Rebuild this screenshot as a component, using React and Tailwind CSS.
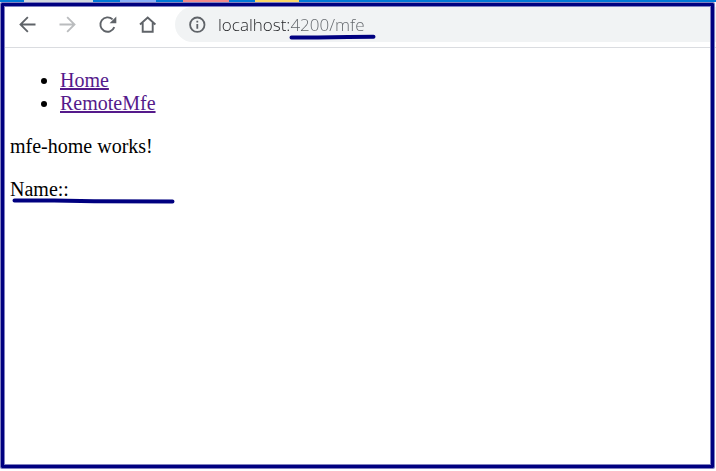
const tabs = [
  "ml-6 w-[69px] bg-[#d3d9df]",
  "ml-[27px] w-9 bg-[#8ab0f8]",
  "ml-[27px] w-[46px] bg-[#f08a88]",
  "ml-[26px] w-11 bg-[#fbd766]",
];

function TabStrip() {
  return (
    <div className="flex h-[2px] bg-[#0078d7]">
      {tabs.map((tab) => (
        <span key={tab} className={tab} />
      ))}
    </div>
  );
}

function ToolButton({ label, disabled, children }) {
  return (
    <button
      type="button"
      aria-label={label}
      disabled={disabled}
      className="flex size-10 shrink-0 items-center justify-center text-[#5f6368] disabled:text-[#babcbe]"
    >
      <svg viewBox="0 0 24 24" className="size-6" fill="currentColor" aria-hidden="true">
        {children}
      </svg>
    </button>
  );
}

function Toolbar() {
  return (
    <header className="flex h-[46px] items-center border-b border-[#dadce0] pl-2">
      <ToolButton label="Back">
        <path d="M19.500 10.500H6.800l5.700-5.700L11.200 3.500l-8 8 8 8 1.300-1.300-5.700-5.700H19.500z" />
      </ToolButton>
      <ToolButton label="Forward" disabled>
        <path d="M3.500 10.500H16.200l-5.700-5.700L11.800 3.500l8 8-8 8-1.300-1.300 5.700-5.700H3.500z" />
      </ToolButton>
      <ToolButton label="Reload">
        <path
          d="M18.300 14.200A7.200 7.200 0 1 1 16.600 6.400"
          fill="none"
          stroke="currentColor"
          strokeWidth="1.900"
        />
        <path d="M20.300 3.500V10.200H13.600z" />
      </ToolButton>
      <ToolButton label="Home">
        <path
          d="M4 11.500 11.700 4.600 19.400 11.500M6.700 9.800V18.700H16.700V9.800"
          fill="none"
          stroke="currentColor"
          strokeWidth="1.900"
        />
      </ToolButton>
      <div className="ml-[7px] flex h-[35px] min-w-0 flex-1 items-center rounded-l-full bg-[#f1f3f4] pl-3">
        <button type="button" aria-label="View site information" className="shrink-0 text-[#5f6368]">
          <svg viewBox="0 0 20 20" className="size-5" aria-hidden="true">
            <circle cx="10.300" cy="9.700" r="7.200" fill="none" stroke="currentColor" strokeWidth="1.800" />
            <path d="M9.400 9h1.800v4.700H9.400zM9.400 5.800h1.800v1.800H9.400z" fill="currentColor" />
          </svg>
        </button>
        <input
          type="text"
          aria-label="Address"
          defaultValue="localhost:4200/mfe"
          className="ml-[11px] h-7 min-w-0 flex-1 bg-linear-to-r from-[#202124] from-[72px] to-[#5f6368] to-[72px] bg-clip-text font-['Open_Sans',sans-serif] text-[17px] font-light text-transparent caret-black outline-none"
        />
      </div>
    </header>
  );
}

function Markup() {
  return (
    <div className="pointer-events-none absolute inset-0" aria-hidden="true">
      <div className="absolute top-[3px] right-[2px] bottom-[3px] left-px rounded-[1px] border-3 border-[#000080] shadow-[0_0_0_1px_#8080c0,inset_0_0_0_1px_#8080c0]" />
      <svg className="absolute top-[34px] left-[288px] h-2 w-[90px]" viewBox="0 0 90 8">
        <path d="M3.500 3.600 30 3.500 60 3 85.500 2.800" fill="none" stroke="#000080" strokeWidth="4" strokeLinecap="round" />
      </svg>
      <svg className="absolute top-[197px] left-[11px] h-2 w-[166px]" viewBox="0 0 166 8">
        <path d="M3.500 3.600 43 3.600 83 4.200 161.500 4.600" fill="none" stroke="#000080" strokeWidth="4" strokeLinecap="round" />
      </svg>
    </div>
  );
}

export default function App() {
  return (
    <div className="relative min-h-screen bg-white">
      <TabStrip />
      <Toolbar />
      <main className="px-[10px] pt-[21px] font-['Liberation_Serif',serif] text-[20px] leading-[23px] text-black">
        <ul className="list-disc pl-[50px]">
          <li>
            <a href="#home" className="text-[#551a8b] underline">Home</a>
          </li>
          <li>
            <a href="#remote" className="text-[#551a8b] underline">RemoteMfe</a>
          </li>
        </ul>
        <p className="mt-5">mfe-home works!</p>
        <p className="mt-5">Name::</p>
      </main>
      <Markup />
    </div>
  );
}
